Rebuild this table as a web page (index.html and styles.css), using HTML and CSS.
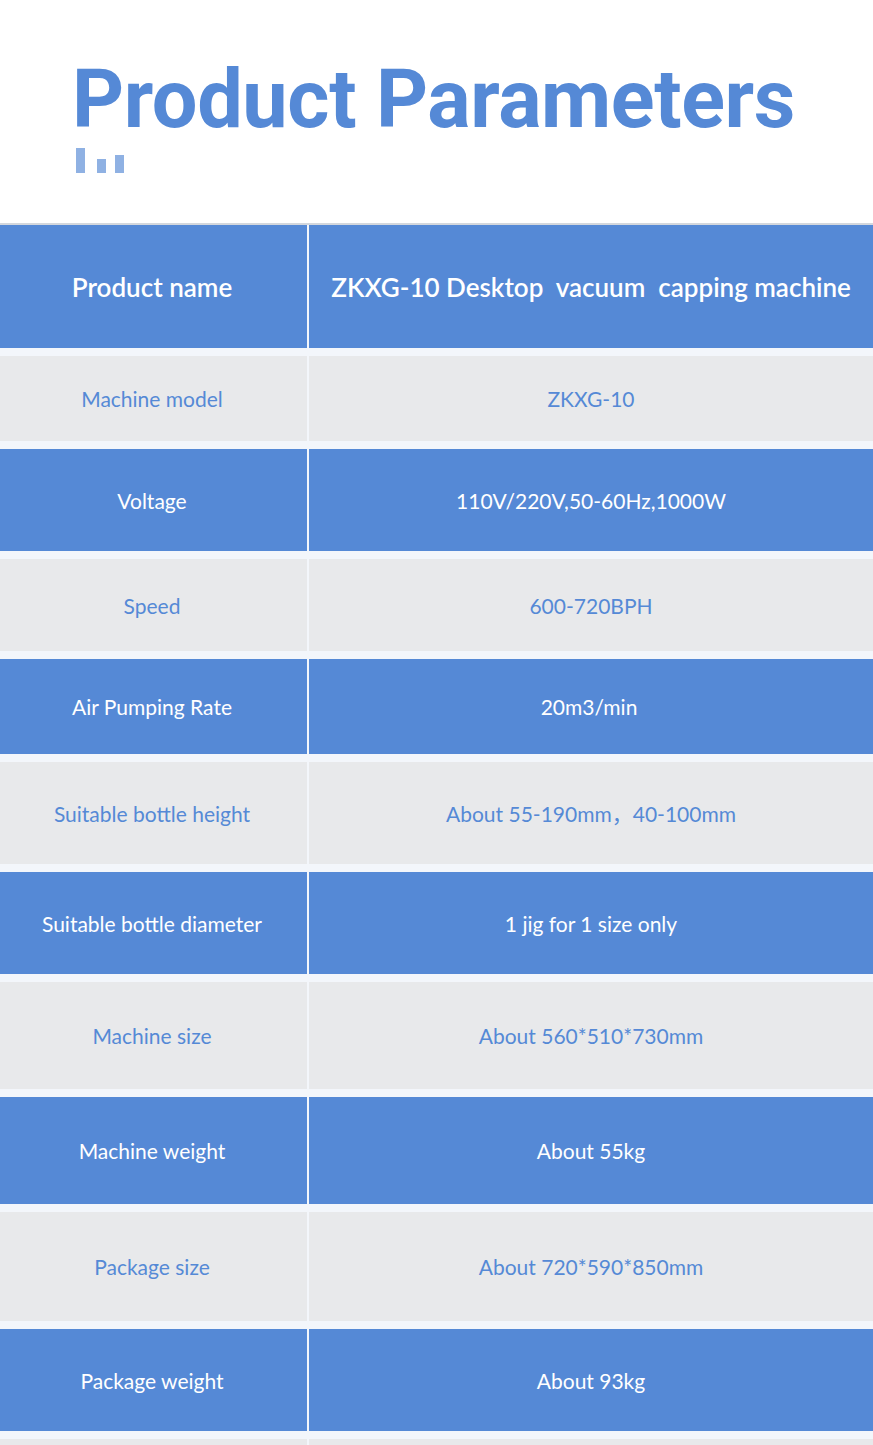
FILE: index.html
```html
<!DOCTYPE html>
<html>
<head>
<meta charset="utf-8">
<link rel="stylesheet" href="styles.css">
</head>
<body>
<header class="hero">
  <h1 class="title">Product Parameters</h1>
  <div class="bars">
    <span class="bar bar-a"></span>
    <span class="bar bar-b"></span>
    <span class="bar bar-c"></span>
  </div>
</header>
<section class="table">
  <div class="row blue head h123"><div class="cell">Product name</div><div class="cell">ZKXG-10 Desktop&nbsp; vacuum&nbsp; capping machine</div></div>
  <div class="row gray h85"><div class="cell">Machine model</div><div class="cell">ZKXG-10</div></div>
  <div class="row blue h102"><div class="cell">Voltage</div><div class="cell">110V/220V,50-60Hz,1000W</div></div>
  <div class="row gray h92"><div class="cell">Speed</div><div class="cell">600-720BPH</div></div>
  <div class="row blue h95"><div class="cell">Air Pumping Rate</div><div class="cell shift">20m3/min</div></div>
  <div class="row gray h102"><div class="cell">Suitable bottle height</div><div class="cell">About 55-190mm，40-100mm</div></div>
  <div class="row blue h102"><div class="cell">Suitable bottle diameter</div><div class="cell">1 jig for 1 size only</div></div>
  <div class="row gray h107"><div class="cell">Machine size</div><div class="cell">About 560*510*730mm</div></div>
  <div class="row blue h107"><div class="cell">Machine weight</div><div class="cell">About 55kg</div></div>
  <div class="row gray h109"><div class="cell">Package size</div><div class="cell">About 720*590*850mm</div></div>
  <div class="row blue h102"><div class="cell">Package weight</div><div class="cell">About 93kg</div></div>
  <div class="row gray h30"><div class="cell"></div><div class="cell"></div></div>
</section>
</body>
</html>
```

FILE: styles.css
```css
html, body {
  margin: 0;
  padding: 0;
  background: #ffffff;
}
body {
  width: 873px;
  overflow: hidden;
  height: 1445px;
}
.hero {
  height: 225px;
  box-sizing: border-box;
  padding: 52px 0 0 72px;
  border-bottom: 2px solid #d3d7dd;
}
.title {
  margin: 0;
  font-family: Roboto, "Liberation Sans", Arial, sans-serif;
  font-weight: 700;
  font-size: 81px;
  line-height: 96px;
  color: #5589d6;
  letter-spacing: -0.4px;
}
.bars {
  display: flex;
  align-items: flex-end;
  gap: 10px;
  margin: 0 0 0 4px;
  height: 25px;
}
.bar {
  display: block;
  width: 9px;
  background: #8fb1e3;
}
.bar-a { height: 25px; }
.bar-b { height: 14px; margin-left: 2px; }
.bar-c { height: 18px; margin-left: -1px; }
.table {
  display: flex;
  flex-direction: column;
  gap: 8px;
  background: #f3f6fb;
}
.row {
  display: grid;
  grid-template-columns: 307px 1fr;
  column-gap: 2px;
}
.cell {
  display: flex;
  align-items: center;
  justify-content: center;
  font-family: "Source Sans Pro", Lato, "Noto Sans CJK SC", sans-serif;
  font-size: 21px;
  text-align: center;
}
.row > .cell:first-child { padding-right: 3px; }
.blue .cell {
  background: #5589d6;
  color: #ffffff;
}
.gray .cell {
  background: #e8e9eb;
  color: #5589d6;
}
.head .cell {
  font-size: 26px;
  font-weight: 600;
}
.shift { padding-right: 4px; }
.h123 { height: 123px; }
.h85 { height: 85px; }
.h102 { height: 102px; }
.h92 { height: 92px; }
.h95 { height: 95px; }
.h107 { height: 107px; }
.h109 { height: 109px; }
.h30 { height: 30px; }
```
